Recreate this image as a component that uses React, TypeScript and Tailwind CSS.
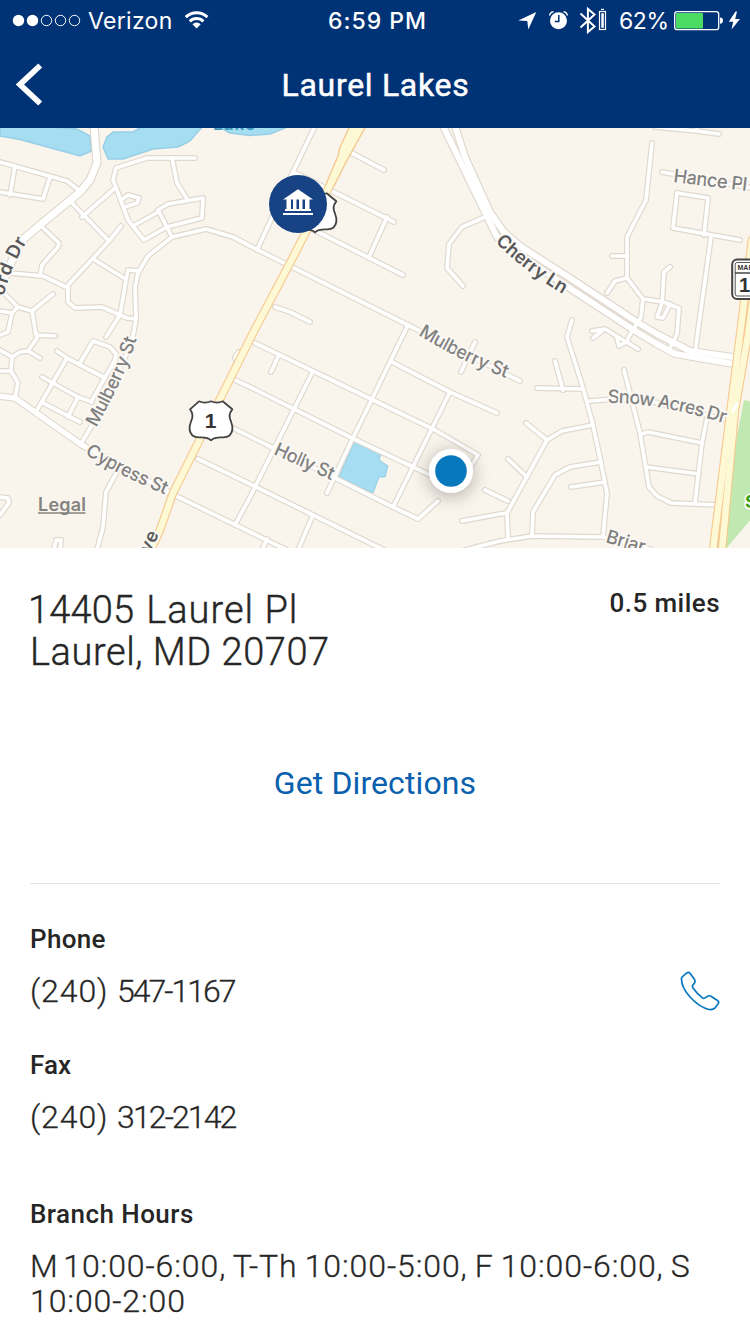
const LAKES = [
  'M0,126 L40,126 L77,129 L90,136 L91.5,151 L80,156 L20,139.5 L0,136Z',
  'M103,147 L107,137 L113,132 L133,132 L143,126 L203,126 L190,141 L178,147 L153,149 L123,159 L108,159Z',
  'M217,126 L230,133 L250,135.5 L270,134 L290,126Z',
];

const STREETS = [
  'M0,162 L67,181 L80,191',
  'M15,166 L10,195',
  'M0,192 L43,199 L50,177',
  'M115,188 L82,217',
  'M71,202 L109,241',
  'M195,158 L147,158 L116,168 L113,180 L117,190 L128,220 L144,240 L167,227 L202,218 L203,198 L168,204 L158,210 L172,237',
  'M172,158 L177,183 L187,199',
  'M121,200 L128,195 L139,198 L137,203 L125,207',
  'M133,226 L158,212',
  'M40,225 L59,243 L58,247 L42,265 L40,276',
  'M10,273 L43,276 L68,288',
  'M121,226 L109,241 L68,285 L68,302 L75,308 L102,307 L127,318 L136,319',
  'M93,259 L124,278',
  'M138,271 L128,270 L126,280 L120,315 L106,337',
  'M520,381 L408,325 L250,246 L233,237 L206,229 L172,237 L148,256 L138,273 L135,287 L136,319 L133,336 L126,355 L95,420 L82,442',
  'M3,292 L18,307 L32,311 L53,294',
  'M18,307 L12,313 L0,311',
  'M12,313 L8,332 L0,335',
  'M32,311 L36,335 L55,336',
  'M36,333 L37,338 L28,351 L20,352 L12,357 L0,350',
  'M28,351 L40,358',
  'M12,357 L11,371 L18,383 L15,397',
  'M0,371 L11,371',
  'M57,351 L67,358 L105,378',
  'M80,363 L93,341 L110,347 L116,354 L115,360 L91,402',
  'M67,358 L37,410',
  'M42,377 L78,397 L92,402',
  'M78,397 L68,417',
  'M43,403 L80,422',
  'M118,470 L106,492 L103,527 L97,550',
  'M-2,497 L8,498 L9,503 L0,515',
  'M54,550 L56,540 L61,540 L60,550',
  'M172,494 L250,532 L287,550',
  'M198,459 L250,484 L313,515 L384,550',
  'M239,352 L235,357 L237,363',
  'M235,380 L250,387 L352,438 L430,475',
  'M255,343 L373,400 L435,430 L478,455 L470,468',
  'M392,362 L450,392 L497,413',
  'M233,428 L273,448 L333,477 L393,507 L418,519 L438,501',
  'M408,325 L352,440 L327,493',
  'M450,392 L393,507',
  'M312,373 L250,497 L235,525',
  'M278,357 L271,372',
  'M313,515 L298,550',
  'M267,539 L262,550',
  'M475,342 L461,372',
  'M485,490 L508,501',
  'M462,521 L500,514 L507,513',
  'M465,550 L500,541 L532,536 L603,537 L650,549',
  'M315,126 L293,172 L257,250',
  'M293,172 L330,190 L394,222',
  'M348,151 L384,170',
  'M387,217 L369,257',
  'M310,228 L403,275',
  'M275,307 L290,312 L310,322',
  'M485,217 L462,227 L449,244 L447,268 L463,286',
  'M655,127 L697,131 L719,134',
  'M697,131 L697,126',
  'M652,143 L646,200 L627,237 L627,278 L643,299 L641,317 L628,338',
  'M612,256 L627,256',
  'M627,278 L615,281 L607,293',
  'M643,299 L663,302 L679,308 L677,334 L670,348',
  'M670,267 L664,272 L662,303 L657,317 L663,318 L670,304',
  'M662,172 L752,188',
  'M677,193 L708,198 L704,235',
  'M677,193 L673,228 L740,240',
  'M711,237 L697,338 L695,354',
  'M572,320 L567,337 L583,388 L593,425 L601,463 L607,493 L603,537',
  'M592,331 L605,329 L618,337 L638,349',
  'M593,338 L602,331',
  'M617,338 L619,346 L628,341',
  'M555,361 L563,390',
  'M537,388 L583,389',
  'M590,401 L615,399 L650,401 L727,420',
  'M624,370 L640,433 L649,487 L657,496 L671,503 L720,505',
  'M642,434 L648,432 L702,443',
  'M646,467 L699,474',
  'M707,418 L702,443 L695,503',
  'M526,423 L547,440',
  'M593,425 L562,431 L547,440 L507,513 L508,538',
  'M508,459 L527,477',
  'M601,462 L570,467 L555,475 L533,512 L532,535',
  'M571,487 L605,482',
];

const AVENUES = [
  { d: 'M94,126 L97,163 L90,180 L80,192 L40,225 L20,242 L8,270 L0,288', w: 7 },
  { d: 'M-2,396 L15,398 L82,445 L172,494', w: 5.4 },
  { d: 'M455,126 L465,157 L490,212 L503,231 L520,246 L570,278 L637,322 L657,334 L690,351 L740,358', w: 6 },
  { d: 'M443,126 L497,237 L517,253 L565,285 L632,329 L655,343 L675,354 L740,365', w: 6 },
];

const HIGHWAYS = [
  'M341,160 L330,185 L290,263 L253,333 L233,373 L173,493 L160,530 L151,550',
  'M752,240 L740,335 L713,550',
  'M761,240 L748,335 L735,410 L722,550',
];

const SHIELD =
  'M199,401.3 Q205,404 211,401.3 Q217,404 222.7,401.3 L232.3,409.3 Q227.5,415 231,421.5 Q234.5,430.5 229.5,435.5 Q226.5,438 221,437.3 Q214,437.3 211,440.3 Q208,437.3 201,437.3 Q195.500,438 192.500,435.500 Q187.500,430.500 191,421.500 Q194.500,415 190,409.300 Z';

const LABELS = [
  { id: 'mul-w', d: 'M96,428 Q125,377 137,338', text: 'Mulberry St', len: 98, bold: false },
  { id: 'cyp', d: 'M85,454 Q112,472 168,496', text: 'Cypress St', len: 90, bold: false },
  { id: 'mul-e', d: 'M418,335 Q462,362 509,379', text: 'Mulberry St', len: 98, bold: false },
  { id: 'hol', d: 'M273,454 L333,481', text: 'Holly St', len: 64, bold: false },
  { id: 'han', d: 'M673,182 L748,191', text: 'Hance Pl', len: 74, bold: false },
  { id: 'sno', d: 'M608,403 Q655,402 727,424', text: 'Snow Acres Dr', len: 119, bold: false },
  { id: 'bri', d: 'M605,542 L652,556', text: 'Briar', len: 40, bold: false },
  { id: 'che', d: 'M495,242 Q525,272 566,296', text: 'Cherry Ln', len: 86, bold: true },
  { id: 'for', d: 'M4,296 Q9,270 30,236', text: 'ord Dr', len: 60, bold: true },
  { id: 'ave', d: 'M150,554 L161,530', text: 've', len: 22, bold: true },
];

function MapView() {
  return (
    <svg
      className="block h-[420px] w-[750px] shrink-0"
      viewBox="0 128 750 420"
      fontFamily="Inter, 'Liberation Sans', sans-serif"
    >
      <defs>
        <filter id="glow" x="-60%" y="-60%" width="220%" height="220%">
          <feDropShadow dx="0" dy="3" stdDeviation="9" floodColor="#000" floodOpacity="0.3" />
        </filter>
        {LABELS.map((l) => (
          <path key={l.id} id={l.id} d={l.d} />
        ))}
      </defs>
      <rect x="0" y="128" width="750" height="420" fill="#f9f4ec" />
      {LAKES.map((d) => (
        <path key={d} d={d} fill="#a5ddf1" stroke="#97cfe6" strokeWidth="1.5" />
      ))}
      <path d="M744,400 L752,402 L752,518 L725,550 L715,550Z" fill="#c1e8b0" />
      <path
        d="M355,440 L382,450 L379,460 L388,466 L385,477 L379,477 L373,493 L339,477Z"
        fill="#a5ddf3"
        stroke="#92cde8"
      />
      <g fill="none" strokeLinecap="round" strokeLinejoin="round">
        {STREETS.map((d) => (
          <path key={d} d={d} stroke="#dfd8ce" strokeWidth="6" />
        ))}
        {AVENUES.map((r) => (
          <path key={r.d} d={r.d} stroke="#ddd6cc" strokeWidth={r.w + 2.2} />
        ))}
        {STREETS.map((d) => (
          <path key={d} d={d} stroke="#fff" strokeWidth="3.7" />
        ))}
        {AVENUES.map((r) => (
          <path key={r.d} d={r.d} stroke="#fff" strokeWidth={r.w} />
        ))}
        {HIGHWAYS.map((d) => (
          <path key={d} d={d} stroke="#f7c88f" strokeWidth="8.6" />
        ))}
        <path d="M350,126 L366,126 L346,162 L334,186 L327,182 L338,156 L340,147Z" fill="#fdf9d5" stroke="#f7c88f" strokeWidth="1.4" />
        {HIGHWAYS.map((d) => (
          <path key={d} d={d} stroke="#fdf9d5" strokeWidth="6.4" />
        ))}
        <path d="M733,411 L737,404" stroke="#fff" strokeWidth="3" />
      </g>

      <text x="213" y="130" fontSize="17" fontWeight="600" fill="#3e9ac0" textLength="42">
        Lake
      </text>

      {LABELS.map((l) => (
        <text
          key={l.id}
          fontSize={18.5}
          fontWeight={l.bold ? 600 : 470}
          fill={l.bold ? '#58585a' : '#808080'}
          stroke="#fbf8f3"
          strokeWidth="4"
          strokeLinejoin="round"
          paintOrder="stroke"
          textLength={l.len}
        >
          <textPath href={'#' + l.id} textLength={l.len}>
            {l.text}
          </textPath>
        </text>
      ))}

      <text x="745" y="508" fontSize="18" fontWeight="700" fill="#35a012" stroke="#fff" strokeWidth="3" paintOrder="stroke">
        S
      </text>

      <text x="38" y="511" fontSize="18" fontWeight="600" fill="#848380" textLength="48">
        Legal
      </text>
      <path d="M38,513 H85.500" stroke="#848380" strokeWidth="1.600" />

      <path d={SHIELD} fill="#fff" stroke="#444" strokeWidth="1.8" strokeLinejoin="round" />
      <text x="210.5" y="428" fontSize="21" fontWeight="700" fill="#333" textAnchor="middle" fontFamily="'Liberation Sans', sans-serif">
        1
      </text>
      <path d={SHIELD} transform="translate(104 -208)" fill="#fff" stroke="#444" strokeWidth="1.8" strokeLinejoin="round" />

      <rect x="732.2" y="259.500" width="40" height="39.500" rx="5" fill="#fff" stroke="#444" strokeWidth="2" />
      <rect x="735.2" y="262.500" width="40" height="33.500" rx="2" fill="none" stroke="#555" strokeWidth="1" />
      <path d="M735,273 H750" stroke="#444" strokeWidth="1.500" />
      <g fill="#333" fontWeight="700" fontFamily="'Liberation Sans', sans-serif">
        <text x="737.5" y="270.300" fontSize="7">
          MARYLAND
        </text>
        <text x="739" y="292" fontSize="20">
          198
        </text>
      </g>

      <circle cx="298" cy="204" r="29" fill="#174384" />
      <g fill="#fff">
        <path d="M283,199.500 L298,189.300 L313,199.500Z" />
        <path d="M286.500,199 h4.500 v10 h-4.500Z M293,199 h3.500 v10 h-3.500Z M299,199 h3.500 v10 h-3.500Z M305,199 h4.500 v10 h-4.500Z" />
        <rect x="285" y="209" width="26" height="2" />
        <rect x="283" y="213" width="30" height="2" />
      </g>

      <circle cx="451" cy="471" r="22" fill="#fff" filter="url(#glow)" />
      <circle cx="451" cy="471" r="15.800" fill="#0878be" />
    </svg>
  );
}

function StatusBar() {
  return (
    <div className="flex h-[41px] items-center font-[Inter,sans-serif] text-[23px] leading-[41px] text-white">
      <svg className="ml-3 h-[41px] w-[76px] shrink-0" viewBox="12 0 76 41">
        <circle cx="18.500" cy="20.500" r="5.700" fill="#fff" />
        <circle cx="32.500" cy="20.500" r="5.700" fill="#fff" />
        <g fill="none" stroke="#fff" strokeWidth="1">
          <circle cx="46.500" cy="20.500" r="5.200" />
          <circle cx="60.500" cy="20.500" r="5.200" />
          <circle cx="74.500" cy="20.500" r="5.200" />
        </g>
      </svg>
      <span className="w-[96px] shrink-0 pt-px whitespace-nowrap tracking-[0.3px]">Verizon</span>
      <svg className="h-[41px] w-[26px] shrink-0" viewBox="184 0 26 41">
        <g fill="none" stroke="#fff" strokeWidth="3">
          <path d="M185.800,17.200 A15.500,15.500 0 0 1 207.400,17.200" />
          <path d="M189.800,21.300 A9.800,9.800 0 0 1 203.400,21.300" />
        </g>
        <path d="M192.500,24.300 A5.700,5.700 0 0 1 200.700,24.300 L196.600,28.500Z" fill="#fff" />
      </svg>
      <span className="ml-[118px] w-[190px] shrink-0 pt-px font-medium whitespace-nowrap tracking-[1px]">6:59 PM</span>
      <svg className="h-[41px] w-[101px] shrink-0" viewBox="518 0 101 41">
        <path d="M518.300,20.400 L536.300,12 L528.300,29.600 L527.300,21Z" fill="#fff" />
        <circle cx="558.500" cy="20.800" r="8.500" fill="#fff" />
        <path d="M549.700,15.500 Q550,12.300 553.500,11.800 M567.300,15.500 Q567,12.300 563.500,11.800" fill="none" stroke="#fff" strokeWidth="1.500" />
        <path d="M558.800,15 V21.500 H554.800" fill="none" stroke="#003276" strokeWidth="1.500" />
        <path d="M580.500,13.500 L594.500,26.500 L587.900,32 V9 L594.500,14.500 L580.500,27.500" fill="none" stroke="#fff" strokeWidth="2" />
        <rect x="599.500" y="11.500" width="6" height="18" fill="none" stroke="#fff" strokeWidth="1.200" />
        <rect x="601.300" y="13.200" width="2.500" height="14.600" fill="#fff" />
        <rect x="601" y="8.800" width="3" height="1.200" fill="#fff" />
      </svg>
      <span className="w-[55px] shrink-0 pt-px whitespace-nowrap tracking-[-0.4px]">62%</span>
      <svg className="h-[41px] w-[68px] shrink-0" viewBox="674 0 68 41">
        <rect x="674.700" y="11.700" width="44" height="18" rx="2.500" fill="none" stroke="#fff" strokeWidth="1.300" />
        <rect x="676" y="13" width="27" height="15.400" rx="1" fill="#4cdc64" />
        <path d="M720,17.500 Q723,17.500 723,20.600 Q723,23.700 720,23.700Z" fill="#fff" />
        <path d="M735.500,11.500 L728.800,21.700 H733.200 L731.500,29.500 L740,18.900 H735.200 L737,11.500Z" fill="#fff" />
      </svg>
    </div>
  );
}

export default function App() {
  return (
    <div className="flex h-[1334px] w-[750px] flex-col overflow-hidden bg-white font-[Roboto,sans-serif] text-[#262626]">
      <header className="h-32 shrink-0 bg-[#003276]">
        <StatusBar />
        <div className="flex h-[87px] items-center">
          <svg className="ml-4 h-[44px] w-[28px]" viewBox="0 0 28 44">
            <path d="M24.200,2.500 L4,21.500 L24.200,40.500" fill="none" stroke="#fff" strokeWidth="5.800" />
          </svg>
          <h1 className="flex-1 pr-[43px] text-center text-[32px] leading-[40px] tracking-[0.7px] whitespace-nowrap text-white [-webkit-text-stroke:0.5px_white]">
            Laurel Lakes
          </h1>
        </div>
      </header>

      <MapView />

      <main className="px-[30px] pt-[41px]">
        <div className="flex items-start justify-between">
          <address className="text-[38px] leading-[42px] font-light tracking-[0.55px] not-italic [-webkit-text-stroke:0.4px_#262626]">
            <span className="-ml-0.5 tracking-[0.2px]">14405</span> <span className="ml-0.5 tracking-[1px]">Laurel Pl</span>
            <br />
            Laurel, MD 20707
          </address>
          <span className="text-[26px] leading-[28px] font-medium tracking-[0.45px]">0.5 miles</span>
        </div>
        <div className="mt-[90px] text-center text-[32px] leading-[40px] tracking-[0.1px] text-[#0860ae]">Get Directions</div>
        <hr className="mt-[80px] border-0 border-t border-[#e4e4e8]" />
        <h2 className="mt-10 text-[26px] leading-[30px] font-medium tracking-[0.3px]">Phone</h2>
        <div className="mt-[17px] flex h-10 items-center justify-between">
          <span className="text-[32px] leading-[40px] font-light tracking-[0.9px] [-webkit-text-stroke:0.3px_#262626]">
            (240) <span className="tracking-[-2px]">547-1167</span>
          </span>
          <svg className="h-10 w-10" viewBox="0 0 40 40">
            <path
              d="M1.500,7 Q1.800,6.200 6.500,2.200 Q8.700,0.600 10.200,2.500 L14.600,8.600 Q15.500,10 14.500,12 L12.600,14.400 Q12,15.500 13,17 Q17,22.800 22.500,26.900 Q23.700,27.700 25,26.900 L28,25 Q29.500,24.400 31,25.200 L37.500,29.500 Q39.500,31 38,33 L34.800,37.200 Q33,39 29,38.500 Q20,36.500 10.500,26.500 Q1,16 1.500,7Z"
              fill="none"
              stroke="#0878be"
              strokeWidth="1.700"
            />
          </svg>
        </div>
        <h2 className="mt-[39px] text-[26px] leading-[30px] font-medium tracking-[0.1px]">Fax</h2>
        <div className="mt-[17px] text-[32px] leading-[40px] font-light tracking-[0.9px] [-webkit-text-stroke:0.3px_#262626]">
          (240) <span className="tracking-[-1.9px]">312-2142</span>
        </div>
        <h2 className="mt-[62px] text-[26px] leading-[30px] font-medium tracking-[0.45px]">Branch Hours</h2>
        <p className="mt-[20px] text-[32px] leading-[35px] font-light tracking-[0.9px] [word-spacing:-1.6px] whitespace-nowrap [-webkit-text-stroke:0.3px_#262626]">
          <span className="[word-spacing:-4px]">M 10:00-6:00,</span> T-Th 10:00-5:00, F 10:00-6:00, S<br />
          10:00-2:00
        </p>
      </main>
    </div>
  );
}
